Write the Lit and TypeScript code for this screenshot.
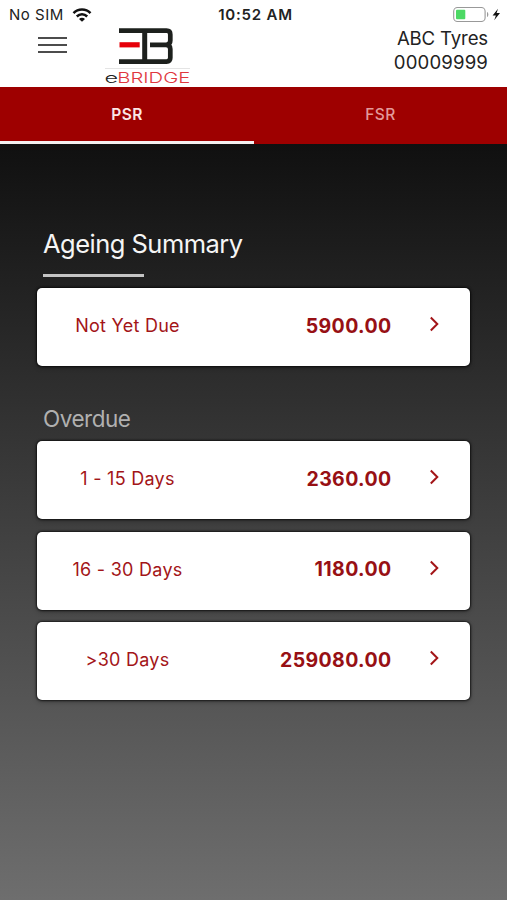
import { LitElement, html, css } from "lit";
import { customElement, property } from "lit/decorators.js";

@customElement("status-bar")
class StatusBar extends LitElement {
  static styles = css`
    :host { display: grid; grid-template-columns: 1fr auto 1fr; align-items: center; height: 29px; padding: 0 6px 0 9px; box-sizing: border-box; color: #222; }
    .carrier { display: flex; align-items: center; gap: 8px; font-size: 15px; letter-spacing: 0.5px; }
    .time { font-size: 15px; font-weight: 600; letter-spacing: 0.8px; padding-left: 1px; }
    .power { display: flex; justify-content: flex-end; }
    svg { display: block; }
  `;
  render() {
    return html`
      <div class="carrier"><span>No SIM</span>
        <svg width="20" height="14" viewBox="0 0 20 14" fill="none" stroke="#111" stroke-width="2.5">
          <path d="M1.5 5.2C6.2.4 13.8.4 18.5 5.2"/><path d="M4.8 8.5c2.9-2.9 7.5-2.9 10.4 0"/>
          <path d="M7 10.9c1.7-1.6 4.3-1.6 6 0L10 13.8z" fill="#111" stroke="none"/>
        </svg>
      </div>
      <div class="time">10:52 AM</div>
      <div class="power">
        <svg width="49" height="17" viewBox="0 0 49 17">
          <rect x="1.7" y="1.5" width="31.4" height="14" rx="3.8" fill="#fff" stroke="#999" stroke-width="1.1"/>
          <rect x="4" y="3.7" width="9.3" height="9.6" rx="1" fill="#4cd964"/>
          <path d="M35 6c1.8.4 1.8 4.6 0 5z" fill="#999"/>
          <path d="M46 2.8L40.6 9.4h3.3L42.2 14.2l5.8-7.2H44.6z" fill="#111"/>
        </svg>
      </div>`;
  }
}

@customElement("brand-header")
class BrandHeader extends LitElement {
  static styles = css`
    :host { display: flex; height: 58px; padding: 0 19px 0 38px; color: #222; }
    .menu { display: flex; flex-direction: column; gap: 5px; width: 29px; padding-top: 8px; }
    .menu i { height: 2px; background: #4c4c4c; }
    .logo { flex: none; margin-left: 33px; margin-top: -2px; overflow: visible; }
    .account { margin-left: auto; text-align: right; font-size: 18.6px; line-height: 24px; margin-top: -3px; }
    .name { letter-spacing: -0.15px; }
    .number { letter-spacing: 0.15px; }
    .wordmark { font-family: Inter, sans-serif; font-size: 14.6px; font-weight: 300; }
  `;
  render() {
    return html`
      <div class="menu"><i></i><i></i><i></i></div>
      <svg class="logo" width="96" height="64" viewBox="100 27 96 64">
        <g fill="none" stroke="#1d201d" stroke-width="4.7">
          <path d="M119 30.7H166.5Q170.3 30.7 170.3 34.5V40.5Q170.3 44.8 166 44.8H150M166 44.8Q170.3 44.8 170.3 49V57.8Q170.3 61.6 166.5 61.6H119"/>
          <path d="M144.7 30V62" stroke-width="5"/>
        </g>
        <path d="M119.5 44.8H139.7" stroke="#e60009" stroke-width="5.2"/>
        <path d="M105 68.5H190" stroke="#ddd" stroke-width=".8"/>
        <text class="wordmark" x="104.6" y="82.6" textLength="13.6" lengthAdjust="spacingAndGlyphs" fill="#222">e</text>
        <text class="wordmark" x="117.3" y="82.6" textLength="73" lengthAdjust="spacingAndGlyphs" fill="#e0373e">BRIDGE</text>
      </svg>
      <div class="account"><div class="name">ABC Tyres</div><div class="number">00009999</div></div>`;
  }
}

@customElement("tab-strip")
class TabStrip extends LitElement {
  static styles = css`
    :host { display: grid; grid-template-columns: 1fr 1fr; height: 57px; background: #9e0000; box-sizing: border-box; }
    .tab { display: flex; align-items: center; justify-content: center; box-sizing: border-box; border-bottom: 3px solid transparent; font-size: 15.5px; font-weight: 500; letter-spacing: 0.5px; padding-left: 0.5px; color: #e39a9a; }
    .active { color: #fbe6e6; border-color: #f4f0f0; font-weight: 600; }
  `;
  render() {
    return html`<div class="tab active">PSR</div><div class="tab">FSR</div>`;
  }
}

@customElement("amount-card")
class AmountCard extends LitElement {
  @property() label = "";
  @property() amount = "";
  static styles = css`
    :host { display: grid; grid-template-columns: 181px 173.5px 1fr; align-items: center; height: 78px; box-sizing: border-box; padding-bottom: 3px; background: #fff; border-radius: 5px; color: #a31518; box-shadow: 0 0 2px 1px rgba(0,0,0,.65), 0 2px 5px rgba(0,0,0,.25); }
    .label { text-align: center; font-size: 18px; letter-spacing: 0.27px; }
    .amount { text-align: right; font-size: 19.5px; font-weight: 700; letter-spacing: 0.38px; color: #971014; }
    svg { display: block; margin-left: 36.5px; margin-top: -3px; }
  `;
  render() {
    return html`
      <div class="label">${this.label}</div>
      <div class="amount">${this.amount}</div>
      <svg width="14" height="16" viewBox="0 0 14 16" fill="none" stroke="#a31518" stroke-width="2"><path d="M2.8 1.5L9.3 8L2.8 14.5"/></svg>`;
  }
}

@customElement("app-root")
class AppRoot extends LitElement {
  static styles = css`
    :host { display: flex; flex-direction: column; height: 900px; background: #fff; font-family: Inter, "Liberation Sans", sans-serif; overflow: hidden; }
    main { flex: 1; box-sizing: border-box; padding: 84px 37px 0; background: linear-gradient(#101010, #6e6e6e); }
    h1 { margin: 0 0 0 6px; font-size: 25.5px; font-weight: 400; line-height: 32px; letter-spacing: -0.52px; color: #f5f5f5; }
    .rule { width: 101px; height: 2.5px; margin: 14px 0 11.5px 6px; background: #c4c4c4; }
    h2 { margin: 37.5px 0 8.5px 6px; font-size: 22.5px; font-weight: 400; line-height: 29px; letter-spacing: -0.5px; color: #b0b0b0; }
    .list { display: grid; gap: 12.5px; }
  `;
  private overdue = [["1 - 15 Days", "2360.00"], ["16 - 30 Days", "1180.00"], [">30 Days", "259080.00"]];
  render() {
    return html`
      <status-bar></status-bar>
      <brand-header></brand-header>
      <tab-strip></tab-strip>
      <main>
        <h1>Ageing Summary</h1>
        <div class="rule"></div>
        <amount-card label="Not Yet Due" amount="5900.00"></amount-card>
        <h2>Overdue</h2>
        <div class="list">
          ${this.overdue.map(([label, amount]) => html`<amount-card label=${label} amount=${amount}></amount-card>`)}
        </div>
      </main>`;
  }
}
